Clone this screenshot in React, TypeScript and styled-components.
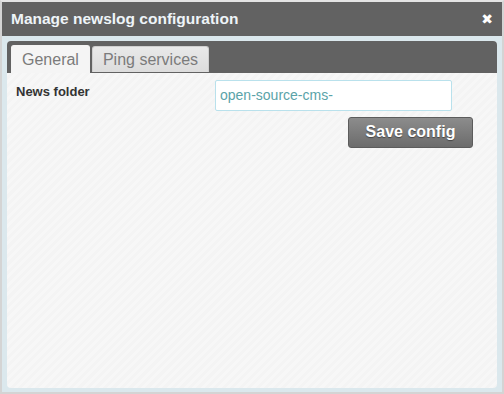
import styled, { createGlobalStyle } from "styled-components";

const GlobalStyle = createGlobalStyle`
  html, body {
    margin: 0;
    padding: 0;
    background: #ffffff;
  }
`;

export default function App() {
  return (
    <>
      <GlobalStyle />
      <Window>
        <TitleBar>
          <Title>Manage newslog configuration</Title>
          <CloseButton>✖</CloseButton>
        </TitleBar>
        <Body>
          <Panel>
            <TabBar>
              <Tab $active>General</Tab>
              <Tab>Ping services</Tab>
            </TabBar>
            <TabContent>
              <FieldRow>
                <Label>News folder</Label>
                <Input defaultValue="open-source-cms-" />
              </FieldRow>
              <Actions>
                <SaveButton>Save config</SaveButton>
              </Actions>
            </TabContent>
          </Panel>
        </Body>
      </Window>
    </>
  );
}

const Window = styled.div`
  width: 504px;
  height: 394px;
  box-sizing: border-box;
  border: 2px solid #d4d4d4;
  border-top-color: #e4e4e4;
  display: flex;
  flex-direction: column;
  font-family: "Liberation Sans", Arial, sans-serif;
  background: #ffffff;
`;

const TitleBar = styled.div`
  height: 34px;
  flex-shrink: 0;
  background: #626262;
  display: flex;
  align-items: center;
  justify-content: space-between;
  padding: 0 9px 0 9px;
`;

const Title = styled.div`
  color: #eef4f8;
  font-size: 15.5px;
  font-weight: bold;
`;

const CloseButton = styled.div`
  color: #ffffff;
  font-size: 14px;
  font-weight: bold;
  font-family: "DejaVu Sans", sans-serif;
`;

const Body = styled.div`
  flex: 1;
  background: #dbe8ed;
  padding: 5px 5px 4px 5px;
  display: flex;
`;

const Panel = styled.div`
  flex: 1;
  border-radius: 4px;
  overflow: hidden;
  display: flex;
  flex-direction: column;
  background: repeating-linear-gradient(
    -45deg,
    #f4f4f4 0px,
    #f4f4f4 3px,
    #f7f7f7 3px,
    #f7f7f7 6px
  );
`;

const TabBar = styled.div`
  height: 32px;
  flex-shrink: 0;
  background: #626262;
  display: flex;
  align-items: flex-end;
  padding: 0 4px;
  gap: 2px;
`;

const Tab = styled.div<{ $active?: boolean }>`
  height: ${(p) => (p.$active ? "28px" : "26px")};
  box-sizing: border-box;
  padding: ${(p) => (p.$active ? "0 10px" : "0 10px 0 10px")};
  display: flex;
  align-items: center;
  font-size: 16px;
  color: #7b7b7b;
  border-radius: 3px 3px 0 0;
  border: 1px solid ${(p) => (p.$active ? "#f4f4f4" : "#cfcfcf")};
  border-bottom: none;
  margin-bottom: ${(p) => (p.$active ? "0" : "1px")};
  background: ${(p) =>
    p.$active ? "#f5f5f5" : "linear-gradient(#e9e9e9, #dcdcdc)"};
`;

const TabContent = styled.div`
  padding: 7px 24px 0 9px;
  display: flex;
  flex-direction: column;
  gap: 6px;
`;

const FieldRow = styled.div`
  display: flex;
  align-items: flex-start;
  justify-content: space-between;
  padding-right: 21px;
`;

const Label = styled.div`
  font-size: 13px;
  font-weight: bold;
  color: #333333;
  padding-top: 4px;
`;

const Input = styled.input`
  width: 237px;
  height: 31px;
  box-sizing: border-box;
  border: 1px solid #b9e1ec;
  border-radius: 2px;
  background: #ffffff;
  color: #5aa3a8;
  font-family: "Liberation Sans", Arial, sans-serif;
  font-size: 14px;
  padding: 0 0 2px 4px;
  outline: none;
`;

const Actions = styled.div`
  display: flex;
  justify-content: flex-end;
`;

const SaveButton = styled.button`
  width: 125px;
  height: 31px;
  border: 1px solid #5c5c5c;
  border-radius: 3px;
  background: linear-gradient(#8c8c8c, #6c6c6c);
  color: #ffffff;
  font-family: "Liberation Sans", Arial, sans-serif;
  font-size: 16px;
  font-weight: bold;
  text-shadow: 0 1px 1px #444444;
  padding: 0 0 2px 0;
`;
